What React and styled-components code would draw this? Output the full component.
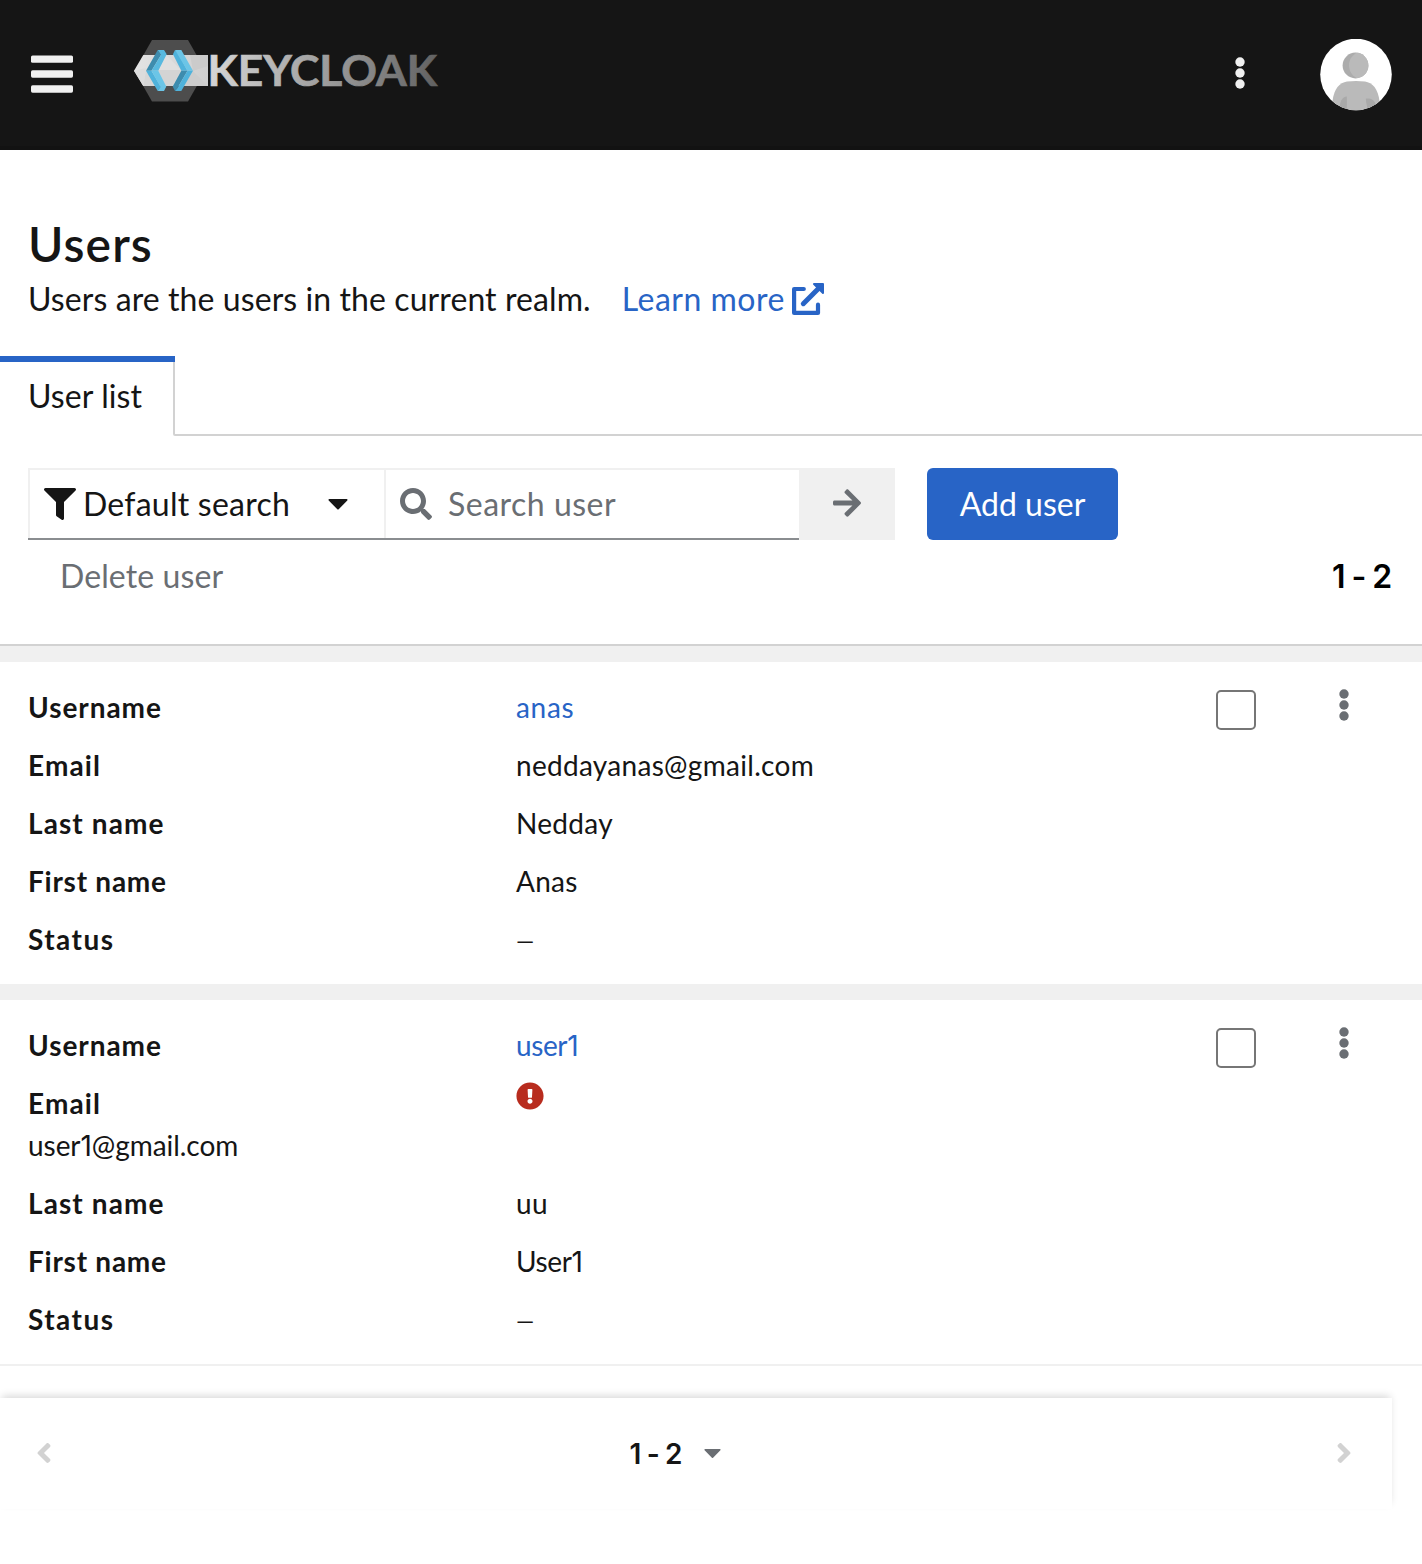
import React from 'react';
import styled, { createGlobalStyle, css } from 'styled-components';
import { FaFilter, FaSearch, FaArrowRight, FaExclamationCircle, FaAngleLeft, FaAngleRight } from 'react-icons/fa';

const color = {
  ink: '#151515',
  muted: '#6a6e73',
  link: '#2864c6',
  line: '#d2d2d2',
  soft: '#f0f0f0',
  danger: '#b82c1e',
};

const GlobalStyle = createGlobalStyle`
  *, *::before, *::after { box-sizing: border-box; }
  body {
    margin: 0;
    background: #fff;
    color: ${color.ink};
    font-family: Lato, "Liberation Sans", sans-serif;
    font-size: 32px;
  }
  button, input { font: inherit; color: inherit; }
  svg { display: block; flex: none; }
`;

const bareButton = css`
  border: 0;
  padding: 0;
  background: none;
  display: flex;
  align-items: center;
`;

const Page = styled.div`
  display: flex;
  flex-direction: column;
  min-height: 1564px;
`;

const Masthead = styled.header`
  display: flex;
  align-items: flex-start;
  height: 150px;
  padding: 39px 30px 0 31px;
  background: ${color.ink};
  border-bottom: 4px solid #121212;
`;

const MenuButton = styled.button`
  ${bareButton}
  margin: 16px 61px 0 0;
`;

const Brand = styled.a`
  margin-top: 1px;
`;

const KebabButton = styled.button`
  ${bareButton}
  color: ${(p) => p.$tone};
`;

const HeaderTools = styled.div`
  display: flex;
  align-items: flex-start;
  gap: 75px;
  margin-left: auto;

  ${KebabButton} { margin-top: 18px; }
`;

const Intro = styled.section`
  height: 206px;
  padding: 63px 28px 0;
`;

const Title = styled.h1`
  margin: 0;
  font-size: 48px;
  font-weight: 600;
  line-height: 62px;
  letter-spacing: 1.1px;
`;

const Description = styled.p`
  display: flex;
  align-items: center;
  margin: 0;
  height: 48px;
  line-height: 48px;
  letter-spacing: 0.09px;
`;

const LearnMore = styled.a`
  display: flex;
  align-items: center;
  gap: 7px;
  margin-left: 31px;
  color: ${color.link};
  letter-spacing: 0.5px;
`;

const Tabs = styled.nav`
  display: flex;
  height: 80px;

  &::after {
    content: '';
    flex: 1;
    border-bottom: 2px solid ${color.line};
  }
`;

const Tab = styled.button`
  ${bareButton}
  width: 175px;
  padding: 0 0 8px 28px;
  border-top: 6px solid ${color.link};
  letter-spacing: 0.1px;
  position: relative;

  &::after {
    content: '';
    position: absolute;
    inset: 0 0 0 auto;
    width: 2px;
    background: ${color.line};
    border-bottom-left-radius: 2px;
  }
`;

const Toolbar = styled.section`
  padding: 32px 30px 0 28px;
  height: 210px;
  border-bottom: 2px solid ${color.line};
`;

const ToolbarRow = styled.div`
  display: flex;
  align-items: center;
  height: 72px;
`;

const FieldGroup = styled.div`
  display: flex;
  border-bottom: 2px solid #8a8d90;
`;

const Field = styled.div`
  display: flex;
  align-items: center;
  width: ${(p) => p.$width}px;
  height: 70px;
  padding-left: 14px;
  border: solid ${color.soft};
  border-width: 2px 0 0 2px;
`;

const FilterLabel = styled.span`
  margin-left: 7px;
  width: 245px;
  padding-bottom: 1px;
  letter-spacing: 0.24px;
`;

const SearchInput = styled.input`
  width: 340px;
  margin-left: 16px;
  padding: 0 0 1px;
  border: 0;
  outline: 0;
  letter-spacing: 0.5px;

  &::placeholder { color: ${color.muted}; opacity: 1; }
`;

const SubmitButton = styled.button`
  ${bareButton}
  justify-content: center;
  width: 96px;
  height: 72px;
  padding-bottom: 2px;
  background: ${color.soft};
  color: ${color.muted};
`;

const PrimaryButton = styled.button`
  ${bareButton}
  justify-content: center;
  width: 191px;
  height: 72px;
  margin-left: 32px;
  padding-bottom: 1px;
  border-radius: 6px;
  background: ${color.link};
  color: #fff;
`;

const PlainButton = styled.button`
  ${bareButton}
  margin-left: 32px;
  padding-bottom: 1px;
  color: ${color.muted};
  letter-spacing: 0.1px;
`;

const Range = styled.span`
  font-family: Inter, "Liberation Sans", sans-serif;
  font-size: ${(p) => p.$size}px;
  font-weight: 600;
  letter-spacing: ${(p) => p.$spacing}px;
  color: ${(p) => (p.$strong ? '#000' : color.ink)};
`;

const TotalRange = styled.div`
  margin-left: auto;
  padding: 0 1px 1px 0;
`;

const Card = styled.article`
  display: flex;
  align-items: flex-start;
  padding: 24px 73px 24px 28px;
  border-top: 16px solid ${color.soft};
`;

const Fields = styled.dl`
  flex: 1;
  display: flex;
  flex-direction: column;
  gap: 16px;
  margin: 0;
  font-size: 28px;
  line-height: 42px;
`;

const FieldRow = styled.div`
  display: grid;
  grid-template-columns: 488px 1fr;
  grid-auto-rows: 42px;
`;

const Label = styled.dt`
  font-weight: 700;
  letter-spacing: ${(p) => p.$spacing}px;
`;

const Value = styled.dd`
  margin: 0;
  letter-spacing: ${(p) => p.$spacing || 0}px;
  color: ${(p) => (p.$link ? color.link : color.ink)};

  svg { color: ${color.danger}; }
`;

const Digit = styled.span`
  font-family: Inter, "Liberation Sans", sans-serif;
  line-height: 1;
`;

const Dash = styled.span`
  font-size: 23px;
  line-height: 1;
  vertical-align: 1px;
`;

const Checkbox = styled.input`
  appearance: none;
  width: 40px;
  height: 40px;
  margin: 4px 83px 0 0;
  border: 2px solid #767676;
  border-radius: 5px;
  background: #fff;
`;

const CardKebab = styled(KebabButton)`
  margin-top: 3px;
`;

const ListEnd = styled.div`
  height: 34px;
  border-top: 2px solid ${color.soft};
`;

const Pagination = styled.footer`
  display: flex;
  align-items: center;
  justify-content: space-between;
  width: 1392px;
  height: 111px;
  padding: 0 32px 0 28px;
  box-shadow: 0 -4px 8px -2px rgba(3, 3, 3, 0.16);
`;

const PageButton = styled.button`
  ${bareButton}
  padding-bottom: 2px;
  color: ${color.line};
`;

const PageMenu = styled.button`
  ${bareButton}
  gap: 23px;
  margin-right: 37px;
  color: ${color.muted};
`;

function KebabDots() {
  return (
    <svg width="10" height="32" viewBox="0 0 10 32" fill="currentColor">
      <circle cx="5" cy="5" r="4.7" />
      <circle cx="5" cy="16" r="4.7" />
      <circle cx="5" cy="27" r="4.7" />
    </svg>
  );
}

function Caret({ width = 20, height = 11 }) {
  return (
    <svg width={width} height={height} viewBox="0 0 20 11" fill="currentColor">
      <path d="M1.3 0h17.4c.8 0 1.1.9.6 1.4l-8.6 8.9c-.4.4-1 .4-1.4 0L.7 1.4C.2.9.5 0 1.3 0z" />
    </svg>
  );
}

function ExternalLink() {
  return (
    <svg width="32" height="32" viewBox="0 0 32 32" fill="none" stroke="currentColor" strokeLinecap="round" strokeLinejoin="round">
      <path d="M11.8 6H2.1V29.9H26V21.7" strokeWidth="4.2" />
      <path d="M11.3 20.7L27 5" strokeWidth="5" />
      <path d="M22 1H31V10Z" fill="currentColor" strokeWidth="2" />
    </svg>
  );
}

function Logo() {
  return (
    <svg width="305" height="62" viewBox="0 0 305 62">
      <defs>
        <linearGradient id="wordmark" gradientUnits="userSpaceOnUse" x1="76" y1="0" x2="303" y2="14">
          <stop offset="0" stopColor="#d6d6d6" />
          <stop offset="0.3" stopColor="#b5b5b5" />
          <stop offset="0.65" stopColor="#8e8e8e" />
          <stop offset="1" stopColor="#626262" />
        </linearGradient>
        <linearGradient id="band" x1="0" y1="0" x2="1" y2="0">
          <stop offset="0" stopColor="#e4e4e4" />
          <stop offset="1" stopColor="#cfcfcf" />
        </linearGradient>
      </defs>
      <path fill="#4d4d4d" d="M18 0H54L71.5 30.7L54 61.5H18L.5 30.7Z" />
      <path fill="url(#band)" d="M9.300 15H74V46H9.300L0 30.700Z" />
      <path fill="#dcdcdc" d="M0 30.700L12 28L9.300 46Z" />
      <path fill="#d6d6d6" d="M9.300 46L12 30L24 46Z" />
      <path fill="#dfdfdf" d="M32 15L47 30L24 30Z" />
      <path fill="#d4d4d4" d="M24 30H47L38 46H32Z" />
      <path fill="#cbcbcb" d="M56 15H74V26L59 31Z" />
      <path fill="#cdcdcd" d="M59 31L74 46H50Z" />
      <path fill="#3d8cae" d="M12 30.700L23.700 10L27 15L17.500 30.700Z" />
      <path fill="#58b9df" d="M23.700 10H30L32.700 14.300L24.300 30.700H17.500L27 15Z" />
      <path fill="#4fb2db" d="M12 30.700H17.500L27 47L23.700 51Z" />
      <path fill="#6bc5e7" d="M17.500 30.700H24.300L32.300 46.500L30 51H23.700L26.500 47Z" />
      <path fill="#4fb2db" d="M39 14.300L41 10L45 15L53.500 30.700H47.300Z" />
      <path fill="#6bc5e7" d="M41 10H47.300L59 30.700H53.500L44 15Z" />
      <path fill="#3d8cae" d="M47.300 30.700H53.500L43.500 48L41 51L38.700 46.500Z" />
      <path fill="#4fb2db" d="M53.500 30.700H59L47.300 51H41L43.500 48Z" />
      <text
        x="73.500"
        y="46"
        fill="url(#wordmark)"
        stroke="url(#wordmark)"
        strokeWidth="0.700"
        fontFamily="Lato, sans-serif"
        fontSize="42.500"
        fontWeight="700"
        textLength="229.500"
        lengthAdjust="spacingAndGlyphs"
      >
        KEYCLOAK
      </text>
    </svg>
  );
}

function Avatar() {
  return (
    <svg width="72" height="72" viewBox="0 0 72 72">
      <defs>
        <clipPath id="face"><circle cx="36" cy="35.500" r="35.800" /></clipPath>
        <clipPath id="head"><circle cx="35.500" cy="26.500" r="12.900" /></clipPath>
      </defs>
      <g clipPath="url(#face)">
        <rect width="72" height="72" fill="#fff" />
        <circle cx="35.500" cy="26.500" r="12.900" fill="#acacac" />
        <circle cx="43" cy="26.500" r="14" fill="#bababa" clipPath="url(#head)" />
        <path fill="#bababa" d="M12.500 72V62C14 50 19.500 43.600 27 42.600Q36 41.600 45 42.600C52.500 43.600 58 50 59.500 62V72Z" />
        <path fill="#a9a9a9" d="M26.800 57.500V72H20V66C20.500 61 23 58 26.800 57.500Z" />
        <path fill="#a9a9a9" d="M45.800 59.500C51 59 54.500 61 55.500 65V72H48C47.500 68 46 65 45.800 59.500Z" />
      </g>
    </svg>
  );
}

/* The figure 1 takes the narrow, footless form inside account names. */
function Name({ text }) {
  return text.split(/(1)/).map((part, i) => (part === '1' ? <Digit key={i}>1</Digit> : part));
}

const labelSpacing = {
  Username: 0.95,
  Email: 1.1,
  'Last name': 1.1,
  'First name': 0.75,
  Status: 1.45,
};

const users = [
  [
    { label: 'Username', value: 'anas', spacing: 0.7, link: true },
    { label: 'Email', value: 'neddayanas@gmail.com', spacing: 0.3 },
    { label: 'Last name', value: 'Nedday', spacing: 0.3 },
    { label: 'First name', value: 'Anas', spacing: 0.3 },
    { label: 'Status', value: '—' },
  ],
  [
    { label: 'Username', value: 'user1', spacing: -0.4, link: true },
    { label: 'Email', value: 'user1@gmail.com', spacing: -0.05, unverified: true },
    { label: 'Last name', value: 'uu', spacing: 0.3 },
    { label: 'First name', value: 'User1', spacing: -0.4 },
    { label: 'Status', value: '—' },
  ],
];

function UserField({ label, value, spacing, link, unverified }) {
  return (
    <FieldRow>
      <Label $spacing={labelSpacing[label]}>{label}</Label>
      {unverified && <Value><FaExclamationCircle size={28} /></Value>}
      <Value $spacing={spacing} $link={link}>
        {value === '—' ? <Dash>—</Dash> : <Name text={value} />}
      </Value>
    </FieldRow>
  );
}

export default function App() {
  return (
    <Page>
      <GlobalStyle />
      <Masthead>
        <MenuButton aria-label="Menu">
          <svg width="42" height="38" viewBox="0 0 42 38" fill="#f0f0f0">
            <rect y="0.400" width="42" height="7.400" rx="1.600" />
            <rect y="15.300" width="42" height="7.400" rx="1.600" />
            <rect y="30.300" width="42" height="7.400" rx="1.600" />
          </svg>
        </MenuButton>
        <Brand><Logo /></Brand>
        <HeaderTools>
          <KebabButton $tone={color.soft} aria-label="Actions"><KebabDots /></KebabButton>
          <Avatar />
        </HeaderTools>
      </Masthead>

      <Intro>
        <Title>Users</Title>
        <Description>
          Users are the users in the current realm.
          <LearnMore>Learn more <ExternalLink /></LearnMore>
        </Description>
      </Intro>

      <Tabs>
        <Tab>User list</Tab>
      </Tabs>

      <Toolbar>
        <ToolbarRow>
          <FieldGroup>
            <Field $width={356}>
              <FaFilter size={32} />
              <FilterLabel>Default search</FilterLabel>
              <Caret />
            </Field>
            <Field $width={415}>
              <FaSearch size={32} color={color.muted} />
              <SearchInput placeholder="Search user" />
            </Field>
          </FieldGroup>
          <SubmitButton aria-label="Search"><FaArrowRight size={32} /></SubmitButton>
          <PrimaryButton>Add user</PrimaryButton>
        </ToolbarRow>
        <ToolbarRow>
          <PlainButton>Delete user</PlainButton>
          <TotalRange><Range $size={32} $spacing={-1.1} $strong>1 - 2</Range></TotalRange>
        </ToolbarRow>
      </Toolbar>

      {users.map((fields, i) => (
        <Card key={i}>
          <Fields>
            {fields.map((field) => <UserField key={field.label} {...field} />)}
          </Fields>
          <Checkbox type="checkbox" />
          <CardKebab $tone={color.muted} aria-label="Actions"><KebabDots /></CardKebab>
        </Card>
      ))}
      <ListEnd />

      <Pagination>
        <PageButton aria-label="Previous"><FaAngleLeft size={32} /></PageButton>
        <PageMenu>
          <Range $size={28} $spacing={-0.9}>1 - 2</Range>
          <Caret width={17} height={9.500} />
        </PageMenu>
        <PageButton aria-label="Next"><FaAngleRight size={32} /></PageButton>
      </Pagination>
    </Page>
  );
}
